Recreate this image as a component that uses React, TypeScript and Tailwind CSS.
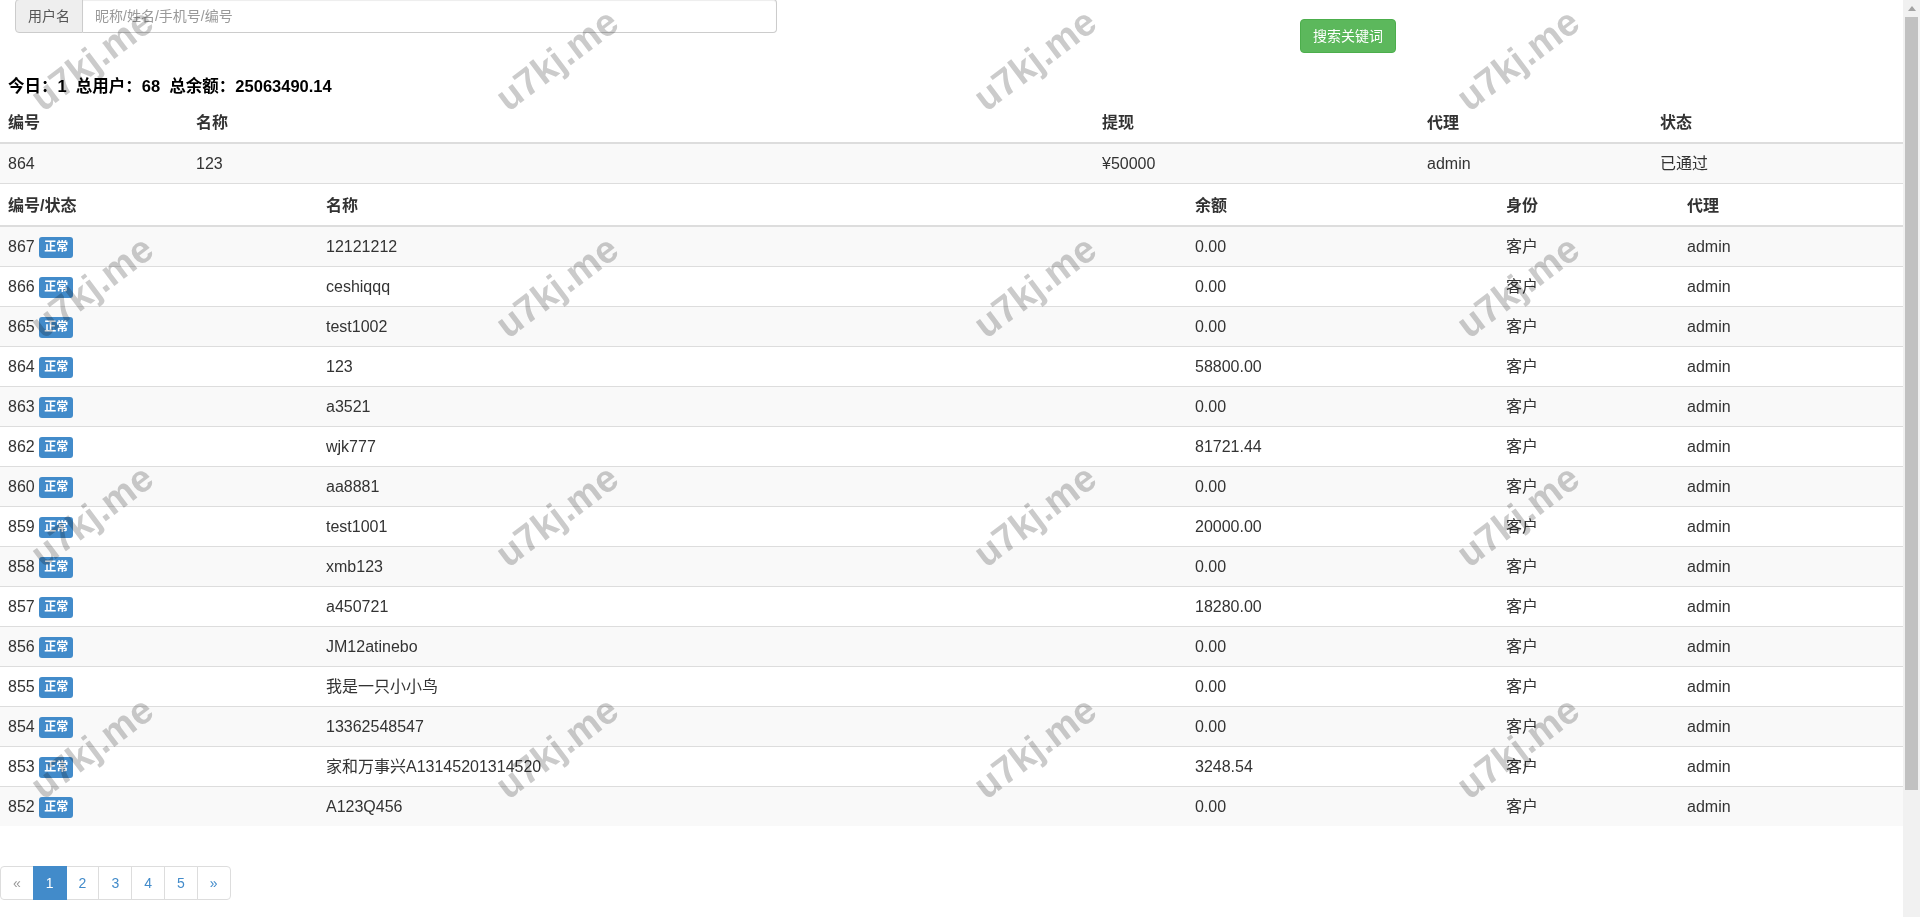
import type React from "react";

type Member = { id: number; name: string; balance: string };

const members: Member[] = [
  { id: 867, name: "12121212", balance: "0.00" },
  { id: 866, name: "ceshiqqq", balance: "0.00" },
  { id: 865, name: "test1002", balance: "0.00" },
  { id: 864, name: "123", balance: "58800.00" },
  { id: 863, name: "a3521", balance: "0.00" },
  { id: 862, name: "wjk777", balance: "81721.44" },
  { id: 860, name: "aa8881", balance: "0.00" },
  { id: 859, name: "test1001", balance: "20000.00" },
  { id: 858, name: "xmb123", balance: "0.00" },
  { id: 857, name: "a450721", balance: "18280.00" },
  { id: 856, name: "JM12atinebo", balance: "0.00" },
  { id: 855, name: "我是一只小小鸟", balance: "0.00" },
  { id: 854, name: "13362548547", balance: "0.00" },
  { id: 853, name: "家和万事兴A13145201314520", balance: "3248.54" },
  { id: 852, name: "A123Q456", balance: "0.00" },
];

const marks = [
  [92, 60], [557, 60], [1035, 60], [1518, 60],
  [92, 287], [557, 287], [1035, 287], [1518, 287],
  [92, 516], [557, 516], [1035, 516], [1518, 516],
  [92, 748], [557, 748], [1035, 748], [1518, 748],
];

const th = "px-2 py-2 text-left font-bold leading-[23px] border-b-2 border-[#ddd]";
const td = "px-2 py-2 leading-[23px] border-t border-[#ddd]";

const Pager: React.FC = () => {
  const items = ["«", "1", "2", "3", "4", "5", "»"];
  return (
    <ul className="mt-[40px] flex text-[14px]">
      {items.map((it, i) => (
        <li key={i}>
          <span
            className={`block h-[34px] px-3 py-[6px] leading-[20px] border ${
              i === 0 ? "rounded-l-[4px]" : "-ml-px"
            } ${i === items.length - 1 ? "rounded-r-[4px]" : ""} ${
              it === "1"
                ? "bg-[#428bca] border-[#428bca] text-white relative"
                : "bg-white border-[#ddd] text-[#428bca]"
            } ${i === 0 ? "text-[#999]" : ""}`}
          >
            {it}
          </span>
        </li>
      ))}
    </ul>
  );
};

export default function App() {
  return (
    <div
      className="relative flex h-[917px] overflow-hidden bg-white text-[16px] text-[#333]"
      style={{ fontFamily: '"Liberation Sans", "Noto Sans CJK SC", sans-serif' }}
    >
      <div className="relative isolate w-0 flex-auto">
        {/* search bar */}
        <div className="flex items-start">
          <div className="ml-[15px] -mt-px flex h-[34px] w-[762px] text-[14px]">
            <span className="flex items-center rounded-l-[4px] border border-[#ccc] bg-[#eee] px-3 text-[#555]">用户名</span>
            <div className="flex flex-auto items-center rounded-r-[4px] border border-l-0 border-[#ccc] px-3 text-[#999] shadow-[inset_0_1px_1px_rgba(0,0,0,0.075)]">
              昵称/姓名/手机号/编号
            </div>
          </div>
          <button className="ml-[523px] mt-[19px] h-[34px] rounded-[4px] border border-[#4cae4c] bg-[#5cb85c] px-3 text-[14px] text-white">
            搜索关键词
          </button>
        </div>

        <div className="mt-[22px] px-2 text-[16.5px] font-bold leading-[23px] text-black">
          今日：1&nbsp;&nbsp;总用户：68&nbsp;&nbsp;总余额：25063490.14
        </div>

        {/* withdraw */}
        <table className="mt-[5px] w-full table-fixed border-collapse">
          <colgroup>
            <col className="w-[188px]" />
            <col className="w-[906px]" />
            <col className="w-[325px]" />
            <col className="w-[233px]" />
            <col />
          </colgroup>
          <thead>
            <tr>
              <th className={th}>编号</th>
              <th className={th}>名称</th>
              <th className={th}>提现</th>
              <th className={th}>代理</th>
              <th className={th}>状态</th>
            </tr>
          </thead>
          <tbody>
            <tr className="bg-[#f9f9f9]">
              <td className={td}>864</td>
              <td className={td}>123</td>
              <td className={td}>¥50000</td>
              <td className={td}>admin</td>
              <td className={td}>已通过</td>
            </tr>
          </tbody>
        </table>

        {/* members */}
        <table className="w-full table-fixed border-collapse">
          <colgroup>
            <col className="w-[318px]" />
            <col className="w-[869px]" />
            <col className="w-[311px]" />
            <col className="w-[181px]" />
            <col />
          </colgroup>
          <thead>
            <tr className="border-t border-[#ddd]">
              <th className={`${th} pt-[10px]`}>编号/状态</th>
              <th className={`${th} pt-[10px]`}>名称</th>
              <th className={`${th} pt-[10px]`}>余额</th>
              <th className={`${th} pt-[10px]`}>身份</th>
              <th className={`${th} pt-[10px]`}>代理</th>
            </tr>
          </thead>
          <tbody>
            {members.map((m, i) => (
              <tr key={m.id} className={i % 2 === 0 ? "bg-[#f9f9f9]" : "bg-white"}>
                <td className={td}>
                  {m.id}{" "}
                  <span className="relative top-[2px] inline-block h-[21px] rounded-[3px] bg-[#428bca] px-[5px] align-top text-[12px] font-bold leading-[21px] text-white">
                    正常
                  </span>
                </td>
                <td className={td}>{m.name}</td>
                <td className={td}>{m.balance}</td>
                <td className={td}>客户</td>
                <td className={td}>admin</td>
              </tr>
            ))}
          </tbody>
        </table>

        <Pager />

        {marks.map(([x, y], i) => (
          <div
            key={i}
            className="pointer-events-none absolute -translate-x-1/2 -translate-y-1/2 -rotate-[37deg] select-none whitespace-nowrap text-[38px] font-semibold text-[#cbcbcb] mix-blend-multiply"
            style={{ left: x, top: y }}
          >
            u7kj.me
          </div>
        ))}
      </div>

      {/* scrollbar */}
      <div className="flex w-[17px] shrink-0 flex-col bg-[#f1f1f1]">
        <div className="flex h-[17px] items-center justify-center">
          <svg width="8" height="5" viewBox="0 0 8 5">
            <path d="M0 5 L4 0 L8 5 Z" fill="#a3a3a3" />
          </svg>
        </div>
        <div className="mx-[2px] h-[773px] bg-[#c1c1c1]" />
      </div>
    </div>
  );
}
